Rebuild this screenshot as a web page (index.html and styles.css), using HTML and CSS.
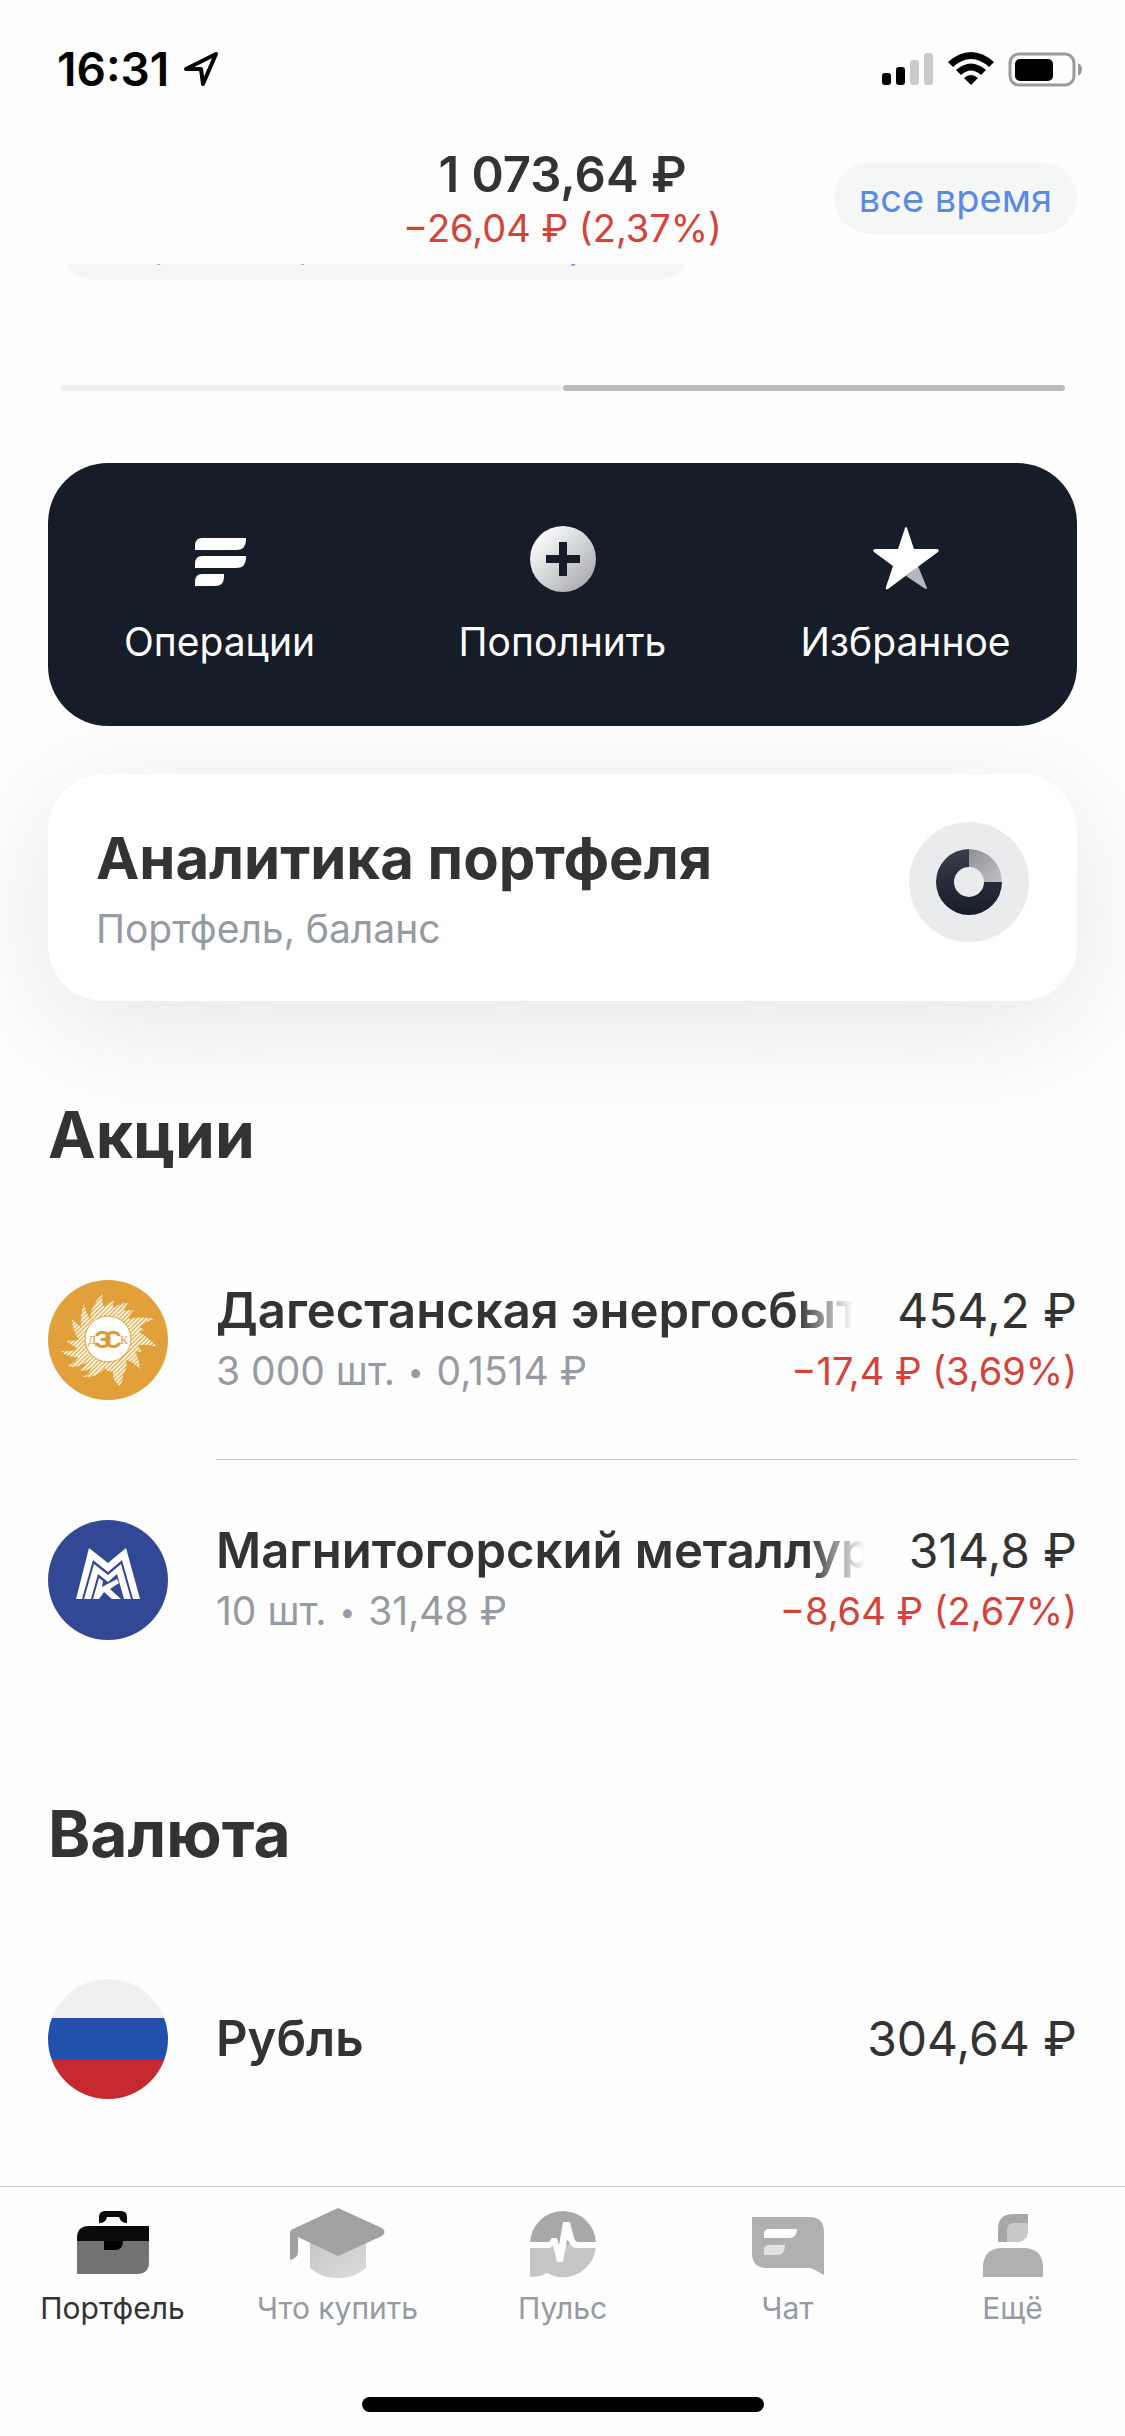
FILE: index.html
```html
<!DOCTYPE html>
<html lang="ru">

<head>
  <meta charset="UTF-8">
  <meta name="viewport" content="width=device-width, initial-scale=1.0">
  <title>Портфель</title>
  <link rel="stylesheet" href="styles.css">
</head>

<body>
  <div class="app">
    <div class="status-bar">
      <div class="status-left">
        <span class="time">16:31</span>
        <svg class="location" viewBox="0 0 36 36" aria-hidden="true">
          <path d="M3 18 L33 3 L20 33 L18 18 Z" fill="none" stroke="#000" stroke-width="4" stroke-linejoin="round" />
        </svg>
      </div>
      <svg class="signals" viewBox="0 0 202 36" aria-hidden="true">
        <rect x="1" y="22" width="9" height="12" rx="3" />
        <rect x="15" y="16" width="9" height="18" rx="3" />
        <rect x="29" y="9" width="9" height="25" rx="3" fill="#cbcbcb" />
        <rect x="43" y="2" width="9" height="32" rx="3" fill="#cbcbcb" />
        <path d="M67 11 Q90 -9 113 11 L108 16 Q90 0 72 16 Z" />
        <path d="M75 19 Q90 6 105 19 L100 24 Q90 15 80 24 Z" />
        <path d="M83 27 Q90 21 97 27 L90 34 Z" />
        <rect x="129" y="3" width="64" height="31" rx="9" fill="none" stroke="#9a9a9a" stroke-width="3" />
        <rect x="134" y="8" width="38" height="22" rx="5" />
        <path d="M197 12 Q201 14 201 18 Q201 23 197 25 Z" fill="#9a9a9a" />
      </svg>
    </div>

    <header class="header">
      <div class="balance">
        <h1 class="total">1 073,64 ₽</h1>
        <p class="change">−26,04 ₽ (2,37%)</p>
      </div>
      <button class="pill" type="button">все время</button>
    </header>

    <main class="content">
      <!-- scrolled under the header, only the lower edge is visible -->
      <div class="scrolled">
        <div class="period"><span class="change">−26,04 ₽ (2,37%)</span> <span>за все время</span></div>
      </div>

      <div class="pager">
        <span class="page"></span>
        <span class="page active"></span>
      </div>

      <section class="actions">
        <button class="action" type="button">
          <svg viewBox="0 0 72 72" aria-hidden="true">
            <path d="M18 15 H62 V17 Q62 27 52 27 H11 V23 Q11 15 18 15 Z" fill="#fff" />
            <path d="M18 33 H62 V35 Q62 45 52 45 H11 V41 Q11 33 18 33 Z" fill="#fff" />
            <path d="M18 51 H40 V54 Q40 63 31 63 H11 V59 Q11 51 18 51 Z" fill="#fff" />
          </svg>
          <span>Операции</span>
        </button>
        <button class="action" type="button">
          <svg viewBox="0 0 72 72" aria-hidden="true">
            <defs>
              <linearGradient id="coin" x1="0" y1="0" x2="1" y2="1">
                <stop offset="0.1" stop-color="#fff" />
                <stop offset="1" stop-color="#9da0a7" />
              </linearGradient>
            </defs>
            <circle cx="36" cy="36" r="33" fill="url(#coin)" />
            <path d="M36 19 V53 M19 36 H53" stroke="#161c28" stroke-width="8" />
          </svg>
          <span>Пополнить</span>
        </button>
        <button class="action" type="button">
          <svg viewBox="0 0 72 72" aria-hidden="true">
            <path d="M48 43 L57 65 Q57 67 54 65 L36 53 Z" fill="#b5b8be" />
            <path d="M35 5 Q36 3 37 5 L44 26 H67 Q70 27 68 29 L49 43 L18 66 Q15 67 16 64 L23 43 L4 29 Q2 27 5 26 H28 Z" fill="#fff" />
          </svg>
          <span>Избранное</span>
        </button>
      </section>

      <a class="analytics" href="#analytics">
        <div>
          <h2>Аналитика портфеля</h2>
          <p>Портфель, баланс</p>
        </div>
        <svg class="donut" viewBox="0 0 120 120" aria-hidden="true">
          <defs>
            <linearGradient id="ring" x1="0" y1="0" x2="0" y2="1">
              <stop offset="0" stop-color="#3b3e4b" />
              <stop offset="1" stop-color="#161c28" />
            </linearGradient>
            <linearGradient id="slice" x1="0" y1="0" x2="1" y2="1">
              <stop offset="0" stop-color="#8f9096" />
              <stop offset="1" stop-color="#bfc1c5" />
            </linearGradient>
          </defs>
          <circle cx="60" cy="60" r="60" fill="#e9ebec" />
          <path d="M60 27 A33 33 0 1 0 93 60 H75 A15 15 0 1 1 60 45 Z" fill="url(#ring)" />
          <path d="M60 27 A33 33 0 0 1 93 60 H75 A15 15 0 0 0 60 45 Z" fill="url(#slice)" />
        </svg>
      </a>

      <h2 class="section-title">Акции</h2>
      <ul class="list">
        <li class="item">
          <svg class="avatar" viewBox="0 0 120 120" aria-hidden="true">
            <defs>
              <pattern id="stripes" width="3" height="3" patternUnits="userSpaceOnUse" patternTransform="rotate(45)">
                <rect width="3" height="3" fill="#e1a03a" />
                <rect width="2" height="3" fill="#fff6e2" />
              </pattern>
            </defs>
            <circle cx="60" cy="60" r="60" fill="#e1a03a" />
            <path fill="url(#stripes)" d="M42 39 Q43 24 55 14 Q53 22 56 27 Q59 23 66 21 Q64 25 66 28 Q71 23 80 23 Q77 27 76 31 Q80 30 86 30 Q81 34 81 39 Q92 36 107 39 Q98 41 92 47 L96 50 L91 52 Q100 57 109 67 Q98 63 90 66 L94 72 L87 71 Q91 78 92 89 Q84 81 78 80 Q80 87 75 95 Q75 101 72 106 Q64 101 65 91 Q59 93 57 88 Q49 98 35 97 Q42 94 43 88 Q38 92 31 90 Q37 87 39 82 Q29 89 20 86 Q28 82 30 77 Q20 78 13 71 Q23 72 30 69 L18 61 Q25 61 31 60 Q24 50 24 39 Q29 44 33 47 Q32 34 36 24 Q38 33 42 39 Z" />
            <circle cx="60" cy="59" r="23" fill="#fff" stroke="#e1a03a" />
            <g fill="#dc9a34" text-anchor="middle">
              <text class="mark-side" x="44" y="64">Д</text>
              <text class="mark-side" x="76" y="64">К</text>
              <text class="mark-core" x="55" y="68">Э</text>
              <text class="mark-core" x="65" y="68">С</text>
            </g>
          </svg>
          <div class="item-body">
            <div class="line main">
              <h3 class="name">Дагестанская энергосбыт</h3>
              <span class="price">454,2 ₽</span>
            </div>
            <div class="line sub">
              <span>3 000 шт. <span class="dot">•</span> 0,1514 ₽</span>
              <span class="change">−17,4 ₽ (3,69%)</span>
            </div>
          </div>
        </li>
        <li class="item">
          <svg class="avatar" viewBox="0 0 120 120" aria-hidden="true">
            <circle cx="60" cy="60" r="60" fill="#324894" />
            <g fill="#fff">
              <path d="M28 79 L41 28 L60 43 L78 28 L92 79 H85 L74 40 L60 52 L45 40 L34 79 Z" />
              <path d="M36 79 L46 44 L60 55 L73 44 L83 79 H76 L69 54 L60 62 L50 54 L43 79 Z" />
              <path d="M45 79 L51 58 L55 61 L54 67 L69 59 L71 63 L62 69 L73 79 H64 L56 72 L51 79 Z" />
            </g>
          </svg>
          <div class="item-body">
            <div class="line main">
              <h3 class="name">Магнитогорский металлур</h3>
              <span class="price">314,8 ₽</span>
            </div>
            <div class="line sub">
              <span>10 шт. <span class="dot">•</span> 31,48 ₽</span>
              <span class="change">−8,64 ₽ (2,67%)</span>
            </div>
          </div>
        </li>
      </ul>

      <h2 class="section-title">Валюта</h2>
      <ul class="list">
        <li class="item">
          <div class="avatar flag"></div>
          <div class="item-body">
            <div class="line main">
              <h3 class="name">Рубль</h3>
              <span class="price">304,64 ₽</span>
            </div>
          </div>
        </li>
      </ul>
    </main>

    <footer class="tab-bar">
      <nav class="tabs">
        <a class="tab active" href="#portfolio">
          <svg viewBox="0 0 96 72" aria-hidden="true">
            <path d="M34 17 V11 Q34 5 40 5 H56 Q62 5 62 11 V17 Q56 17 54 11 H42 Q41 17 34 17 Z" fill="#0b0b0b" />
            <path d="M12 35 H84 V56 Q84 68 72 68 H12 Z" fill="#737373" />
            <path d="M24 20 H84 V35 H12 V32 Q12 20 24 20 Z" fill="#0b0b0b" />
            <path d="M39 35 H58 Q58 44 50 44 H39 Z" fill="#000" />
          </svg>
          <span>Портфель</span>
        </a>
        <a class="tab" href="#buy">
          <svg viewBox="0 0 96 72" aria-hidden="true">
            <defs>
              <linearGradient id="cap" x1="0" y1="0" x2="1" y2="1">
                <stop offset="0" stop-color="#c6c6c6" />
                <stop offset="1" stop-color="#dcdcdc" />
              </linearGradient>
            </defs>
            <path d="M20 34 H76 V62 Q65 72 48 72 Q31 72 20 62 Z" fill="url(#cap)" />
            <path d="M48 2 L92 22 Q97 26 92 30 L48 50 L8 31 V46 Q8 52 0 54 V27 Q0 24 3 23 Z" fill="#a1a1a1" />
          </svg>
          <span>Что купить</span>
        </a>
        <a class="tab" href="#pulse">
          <svg viewBox="0 0 96 72" aria-hidden="true">
            <path d="M15 38 A33 33 0 0 1 81 38 Z" fill="#a8a8a8" />
            <path d="M15 38 H81 A33 33 0 0 1 32 67 Q25 71 15 71 Z" fill="#c6c6c6" />
            <path d="M13 36 H34 L37 32 H42 L44 39 L48 16 H55 L59 32 Q60 36 64 36 H83 V42 H62 Q56 42 54 36 L52 34 L48 56 H42 L38 39 Q37 42 34 42 H13 Z" fill="#fefefe" />
          </svg>
          <span>Пульс</span>
        </a>
        <a class="tab" href="#chat">
          <svg viewBox="0 0 96 72" aria-hidden="true">
            <path d="M12 11 H69 Q84 11 84 26 V69 L73 63 Q71 62 68 62 H27 Q12 62 12 47 Z" fill="#b0b0b0" />
            <path d="M29 23 H57 Q57 32 49 32 H24 V28 Q24 23 29 23 Z" fill="#fff" />
            <path d="M29 39 H45 Q45 49 37 49 H24 V44 Q24 39 29 39 Z" fill="#e2e2e2" />
          </svg>
          <span>Чат</span>
        </a>
        <a class="tab" href="#more">
          <svg viewBox="0 0 96 72" aria-hidden="true">
            <path d="M48 8 H63 V23 Q63 36 50 36 H33 V23 Q33 8 48 8 Z" fill="#a7a7a7" />
            <path d="M49 17 H63 V23 Q63 36 50 36 H42 V24 Q42 17 49 17 Z" fill="#c8c8c8" />
            <path d="M36 42 H60 Q78 43 78 62 V71 H18 V62 Q18 43 36 42 Z" fill="#b0b0b0" />
          </svg>
          <span>Ещё</span>
        </a>
      </nav>
      <div class="home-indicator"></div>
    </footer>
  </div>
</body>

</html>
```

FILE: styles.css
```css
* {
  box-sizing: border-box;
}

body {
  margin: 0;
  background: #fefefe;
  color: #333;
  font-family: Inter, "Liberation Sans", sans-serif;
  font-size: 39px;
  line-height: 46px;
}

h1,
h2,
h3,
p,
ul {
  margin: 0;
  padding: 0;
}

ul {
  list-style: none;
}

a {
  color: inherit;
  text-decoration: none;
}

button {
  border: none;
  padding: 0;
  background: none;
  font: inherit;
  cursor: pointer;
}

.app {
  display: flex;
  flex-direction: column;
  min-height: 100vh;
}

.status-bar {
  display: flex;
  justify-content: space-between;
  align-items: center;
  height: 132px;
  padding: 6px 42px 0 57px;
}

.status-left {
  display: flex;
  align-items: center;
  gap: 14px;
}

.time {
  color: #000;
  font-size: 46px;
  font-weight: 600;
}

.location {
  width: 36px;
  height: 36px;
}

.signals {
  width: 202px;
  height: 36px;
}

.header {
  display: grid;
  grid-template-columns: 1fr auto 1fr;
  align-items: center;
  height: 132px;
  padding: 0 48px;
}

.balance {
  grid-column: 2;
  text-align: center;
}

.total {
  font-size: 49px;
  font-weight: 600;
  line-height: 60px;
}

.change {
  color: #d64238;
  font-size: 38px;
}

.pill {
  justify-self: end;
  height: 72px;
  padding: 0 25px;
  border-radius: 36px;
  background: #f5f7f7;
  color: #5a89e6;
  font-size: 38px;
}

.content {
  padding: 0 48px;
}

.scrolled {
  display: flex;
  align-items: flex-end;
  height: 16px;
  padding: 0 14px;
  overflow: hidden;
}

.period {
  padding: 0 24px;
  border-radius: 32px;
  background: #f6f6f6;
  color: #5a89e6;
  line-height: 72px;
  white-space: nowrap;
}

.pager {
  display: flex;
  margin: 105px 12px 72px;
}

.page {
  flex: 1;
  height: 6px;
  border-radius: 3px;
  background: #eff0f0;
}

.page.active {
  background: #bbbdbd;
}

.actions {
  display: grid;
  grid-template-columns: repeat(3, 1fr);
  padding: 60px 0 61px;
  border-radius: 60px;
  background: #161c28;
}

.action {
  display: flex;
  flex-direction: column;
  align-items: center;
  gap: 24px;
  color: #fff;
}

.action svg {
  width: 72px;
  height: 72px;
}

.analytics {
  display: flex;
  justify-content: space-between;
  margin-top: 48px;
  padding: 48px 48px 49px;
  border-radius: 56px;
  background: #fff;
  box-shadow: 0 24px 120px rgba(0, 0, 0, 0.1);
}

.analytics h2 {
  margin-bottom: 12px;
  font-size: 58px;
  font-weight: 700;
  line-height: 72px;
}

.analytics p {
  color: #959aa3;
}

.donut {
  flex: none;
  width: 120px;
  height: 120px;
}

/* keeps the dark card above the analytics shadow */
.actions,
.section-title {
  position: relative;
  z-index: 1;
}

.section-title {
  margin: 96px 0 48px;
  font-size: 64px;
  font-weight: 700;
  line-height: 75px;
}

.item {
  display: flex;
  align-items: center;
  gap: 48px;
}

.avatar {
  flex: none;
  width: 120px;
  height: 120px;
}

.flag {
  border-radius: 50%;
  background: linear-gradient(#f0f0f0 39px, #2151ad 39px, #2151ad 81px, #c62930 81px);
}

.mark-side {
  font: 12px "Liberation Serif", serif;
}

.mark-core {
  font: bold 24px "Liberation Sans", sans-serif;
}

.item-body {
  display: flex;
  flex: 1;
  flex-direction: column;
  justify-content: center;
  min-width: 0;
  height: 240px;
}

.item:not(:last-child) .item-body {
  border-bottom: 1px solid #c8c9cb;
}

.line {
  display: flex;
  justify-content: space-between;
  align-items: baseline;
  white-space: nowrap;
}

.main {
  gap: 44px;
  font-size: 48px;
  line-height: 62px;
}

.sub {
  color: #959aa3;
  line-height: 58px;
}

.dot {
  margin: 0 2px;
  font-size: 28px;
  line-height: 1;
  vertical-align: 3px;
}

.name {
  flex: 1;
  min-width: 0;
  overflow: hidden;
  font-size: 49px;
  font-weight: 600;
  -webkit-mask-image: linear-gradient(to left, transparent, #000 56px);
  mask-image: linear-gradient(to left, transparent, #000 56px);
}

.tab-bar {
  margin-top: auto;
  border-top: 1px solid #c8c8ca;
}

.tabs {
  display: grid;
  grid-template-columns: repeat(5, 1fr);
  padding-top: 19px;
}

.tab {
  display: flex;
  flex-direction: column;
  align-items: center;
  gap: 12px;
  color: #959aa3;
  font-size: 30px;
  line-height: 36px;
}

.tab svg {
  width: 96px;
  height: 72px;
}

.tab.active {
  color: #333;
}

.home-indicator {
  width: 402px;
  height: 15px;
  margin: 71px auto 24px;
  border-radius: 8px;
  background: #000;
}
```
